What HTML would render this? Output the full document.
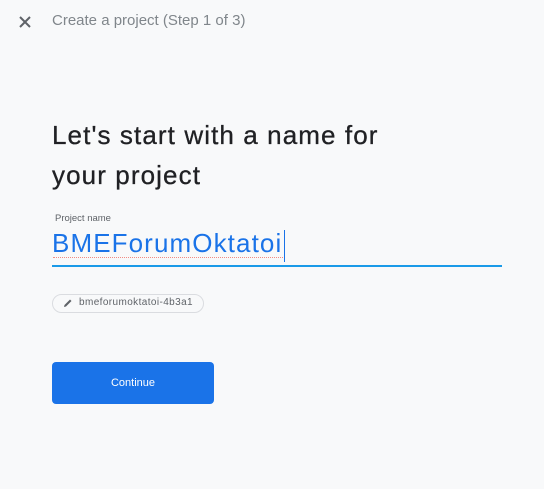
<!DOCTYPE html>
<html><head><style>
body{margin:0;width:544px;height:489px;background:#f8f9fa;font-family:"Liberation Sans",sans-serif;position:relative;overflow:hidden}
.a{position:absolute}
</style></head><body>
<svg class="a" style="left:19px;top:16px" width="12" height="12" viewBox="0 0 12 12"><path d="M1 1L11 11M11 1L1 11" stroke="#5f6368" stroke-width="2"/></svg>
<div class="a" style="left:52px;top:12px;font-size:15px;color:#80868b">Create a project (Step 1 of 3)</div>
<div class="a" style="left:52px;top:115px;font-size:26px;line-height:40px;color:#202124;letter-spacing:1.1px;-webkit-text-stroke:0.3px #202124">Let's start with a name for<br>your project</div>
<div class="a" style="left:55px;top:213px;font-size:9.5px;color:#5f6368">Project name</div>
<div class="a" style="left:52px;top:228px;font-size:26px;color:#1a73e8;letter-spacing:1.1px">BMEForumOktatoi</div>
<div class="a" style="left:53px;top:257px;width:230px;border-top:1px dotted #f28b82"></div>
<div class="a" style="left:284px;top:230px;width:1px;height:32px;background:#1a73e8"></div>
<div class="a" style="left:52px;top:265px;width:450px;height:2px;background:#1a9ae8"></div>
<div class="a" style="left:52px;top:294px;width:152px;height:19px;border:1px solid #dadce0;border-radius:10px;box-sizing:border-box"></div>
<svg class="a" style="left:63px;top:298px" width="10" height="10" viewBox="0 0 10 10"><path d="M1 9L1.5 7 7 1.5 8.5 3 3 8.5Z" fill="#5f6368"/></svg>
<div class="a" style="left:79px;top:297px;font-size:10px;color:#5f6368;letter-spacing:0.4px">bmeforumoktatoi-4b3a1</div>
<div class="a" style="left:52px;top:362px;width:162px;height:42px;background:#1a73e8;border-radius:4px;color:#fff;font-size:11px;text-align:center;line-height:42px">Continue</div>
</body></html>
